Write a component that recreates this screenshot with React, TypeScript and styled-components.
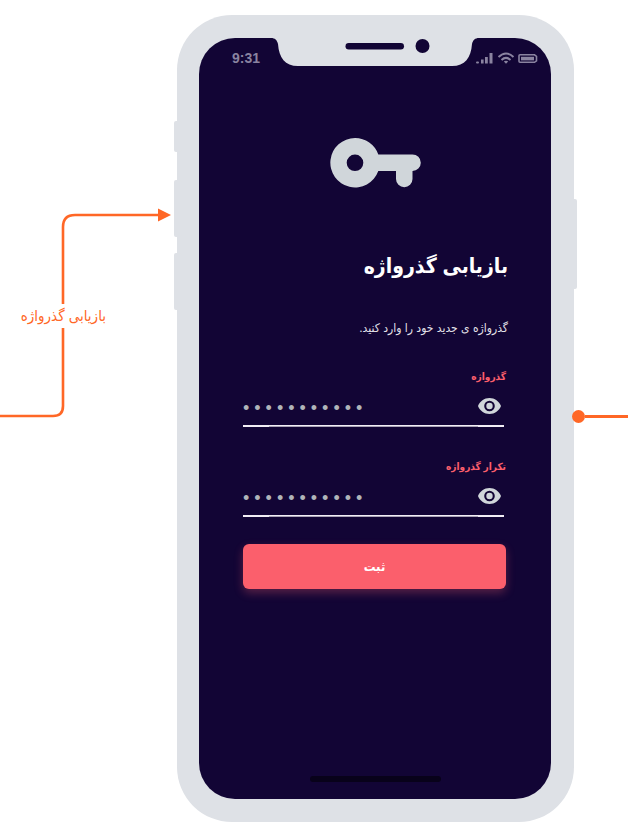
import React, { useId, useState } from "react";
import styled, { createGlobalStyle } from "styled-components";

const colors = {
  shell: "#dee1e6",
  screen: "#120535",
  coral: "#fb5f6c",
  orange: "#ff6726",
  icon: "#d0d6da",
  status: "#8a83a0",
};

const fonts = '"Liberation Sans", "DejaVu Sans Condensed", "DejaVu Sans", sans-serif';

const GlobalStyle = createGlobalStyle`
  *, *::before, *::after { box-sizing: border-box; }
  body { margin: 0; background: #fff; font-family: ${fonts}; }
`;

const Board = styled.div`
  display: grid;
  grid-template-columns: minmax(120px, 177fr) minmax(340px, 397fr) minmax(40px, 54fr);
  align-items: start;
  padding: 15px 0 10px;
  overflow: hidden;
`;

const Incoming = styled.div`
  position: relative;
  display: flex;
  justify-content: flex-end;
  margin-top: 191px;
  padding-right: 6px;
`;

const FlowLabel = styled.span`
  position: absolute;
  right: 68px;
  top: 98px;
  padding: 0 3px;
  background: #fff;
  color: ${colors.orange};
  font-size: 15px;
  line-height: 24px;
  white-space: nowrap;
`;

const Outgoing = styled.div`
  position: relative;
  z-index: 1;
  margin: 395px 0 0 -2px;
  display: flex;
  align-items: center;
`;

const Dot = styled.span`
  width: 13px;
  height: 13px;
  border-radius: 50%;
  background: ${colors.orange};
`;

const Line = styled.span`
  flex: 1;
  height: 3px;
  background: ${colors.orange};
`;

const Phone = styled.main`
  position: relative;
  padding: 23px 23px 23px 22px;
  border-radius: 55px;
  background: ${colors.shell};
`;

const SideKey = styled.span<{ $side: "left" | "right"; $top: number; $length: number }>`
  position: absolute;
  ${(p) => p.$side}: -3px;
  top: ${(p) => p.$top}px;
  width: 8px;
  height: ${(p) => p.$length}px;
  border-radius: 2px;
  background: ${colors.shell};
`;

const Screen = styled.section`
  display: flex;
  flex-direction: column;
  min-height: 761px;
  border-radius: 36px;
  overflow: hidden;
  background: ${colors.screen};
  color: #fff;
`;

const StatusBar = styled.header`
  display: grid;
  grid-template-columns: minmax(0, 1fr) 208px minmax(0, 1fr);
  color: ${colors.status};
`;

const Clock = styled.time`
  padding: 12px 0 0 33px;
  font-size: 14px;
  font-weight: 700;
  line-height: 16px;
`;

const StatusIcons = styled.div`
  display: flex;
  justify-content: flex-end;
  padding: 14px 13px 0 0;

  svg { flex: none; }
`;

const Content = styled.div`
  display: flex;
  flex-direction: column;
  padding: 71px 43px 0 44px;
`;

const KeyIcon = styled.svg`
  align-self: center;
`;

const Title = styled.h1`
  margin: 62px 0 0;
  font-size: 21px;
  line-height: 32px;
`;

const Hint = styled.p`
  margin: 38px 0 0;
  color: #e4e2ea;
  font-size: 12px;
  line-height: 16px;
`;

const Form = styled.form`
  display: flex;
  flex-direction: column;
  gap: 32px;
  margin: 33px 2px 0 0;
`;

const Field = styled.div`
  display: flex;
  flex-direction: column;
`;

const Label = styled.label`
  color: ${colors.coral};
  font-size: 10px;
  font-weight: 700;
  line-height: 16px;
`;

const Control = styled.div`
  display: flex;
  align-items: center;
  direction: ltr;
  height: 42px;
  margin-right: 2px;
  padding-right: 3px;
  background:
    linear-gradient(#f1edf5, #f1edf5) 0 calc(100% - 1px) / 100% 1px no-repeat,
    linear-gradient(90deg, #f1edf5 26px, #a9a3b5 26px calc(100% - 26px), #f1edf5 calc(100% - 26px)) 0 100% / 100% 1px no-repeat;
`;

const MaskedInput = styled.input`
  flex: 1;
  min-width: 0;
  padding: 4px 0 0;
  border: 0;
  outline: 0;
  background: transparent;
  color: #b0b5b9;
  font: 18px/24px "Liberation Sans", sans-serif;
`;

const RevealButton = styled.button`
  display: flex;
  padding: 0;
  border: 0;
  background: none;
  color: ${colors.icon};
  cursor: pointer;
`;

const Submit = styled.button`
  height: 45px;
  margin-top: -5px;
  border: 0;
  border-radius: 6px;
  background: ${colors.coral};
  box-shadow: 0 4px 10px rgba(251, 95, 108, 0.3);
  color: #fff;
  font: 700 13px/20px ${fonts};
  cursor: pointer;
`;

const HomeBar = styled.div`
  align-self: center;
  width: 131px;
  height: 6px;
  margin: auto 0 17px;
  border-radius: 3px;
  background: #08021a;
`;

function FlowArrow() {
  return (
    <svg width="171" height="213" viewBox="0 0 171 213" aria-hidden="true">
      <path d="M0 210H53Q63 210 63 200V21Q63 9 75 9H159" fill="none" stroke={colors.orange} strokeWidth="2.6" />
      <path d="M158 2.5 171 9l-13 6.5z" fill={colors.orange} />
    </svg>
  );
}

function Notch() {
  return (
    <svg width="208" height="29" viewBox="0 0 208 29" aria-hidden="true">
      <path
        d="M0 0H208C204 0 202 2 201 6C200 20 194 28 181 28H27C14 28 8 20 7 6C6 2 4 0 0 0Z"
        fill={colors.shell}
      />
      <rect x="74.5" y="5" width="58.5" height="6.5" rx="3.25" fill={colors.screen} />
      <circle cx="151.5" cy="8" r="7" fill={colors.screen} />
    </svg>
  );
}

function StatusGlyphs() {
  return (
    <svg width="62" height="13" viewBox="0 0 62 13" fill="currentColor" aria-hidden="true">
      <rect x="0" y="9.5" width="3" height="2" rx="1" />
      <rect x="5" y="7.5" width="2.6" height="4" />
      <rect x="9" y="5" width="2.8" height="6.5" />
      <rect x="13.5" y="1" width="3" height="10.5" />
      <g fill="none" stroke="currentColor" strokeWidth="2">
        <path d="M22.5 5Q30 -2 37.5 5" />
        <path d="M25.5 8Q30 3.8 34.5 8" />
      </g>
      <path d="M27.8 9.5Q30 8 32.200 9.5L30 11.8z" />
      <path d="M44 2.800h14.5l2 1.500v4.500l-2 1.500H44q-1 0-1-1V3.800q0-1 1-1z" fill="none" stroke="currentColor" strokeWidth="1.6" />
      <rect x="45" y="4.8" width="13" height="3.6" />
    </svg>
  );
}

function EyeIcon() {
  return (
    <svg width="23" height="16" viewBox="0 0 23 16" aria-hidden="true">
      <path
        fill="currentColor"
        fillRule="evenodd"
        d="M11.5 0C6.3 0 1.8 3.3 0 8c1.8 4.7 6.3 8 11.5 8S21.2 12.7 23 8C21.2 3.3 16.7 0 11.5 0Zm0 13.3a5.3 5.3 0 1 1 0-10.6 5.3 5.3 0 0 1 0 10.6Zm0-2.1a3.2 3.2 0 1 0 0-6.4 3.2 3.2 0 0 0 0 6.4Z"
      />
    </svg>
  );
}

function PasswordField({ label }: { label: string }) {
  const id = useId();
  const [value, setValue] = useState(Array(11).fill("•").join(" "));
  return (
    <Field>
      <Label htmlFor={id}>{label}</Label>
      <Control>
        <MaskedInput id={id} value={value} onChange={(e) => setValue(e.target.value)} />
        <RevealButton type="button" aria-label="نمایش گذرواژه">
          <EyeIcon />
        </RevealButton>
      </Control>
    </Field>
  );
}

export default function App() {
  return (
    <>
      <GlobalStyle />
      <Board>
        <Incoming>
          <FlowArrow />
          <FlowLabel dir="rtl">بازیابی گذرواژه</FlowLabel>
        </Incoming>
        <Phone>
          <SideKey $side="left" $top={106} $length={31} />
          <SideKey $side="left" $top={165} $length={57} />
          <SideKey $side="left" $top={238} $length={57} />
          <SideKey $side="right" $top={184} $length={90} />
          <Screen>
            <StatusBar>
              <Clock>9:31</Clock>
              <Notch />
              <StatusIcons>
                <StatusGlyphs />
              </StatusIcons>
            </StatusBar>
            <Content dir="rtl" lang="fa">
              <KeyIcon width="92" height="50" viewBox="0 0 92 50" aria-hidden="true">
                <path
                  fill={colors.icon}
                  fillRule="evenodd"
                  d="M25 0a24.7 24.7 0 1 0 23.3 33H66v8a8.2 8.2 0 0 0 16.5 0v-8a8.3 8.3 0 0 0 0-16.6H48.300A24.7 24.7 0 0 0 25 0Zm0 16.5a8.3 8.3 0 1 1 0 16.6 8.3 8.3 0 0 1 0-16.6Z"
                />
              </KeyIcon>
              <Title>بازیابی گذرواژه</Title>
              <Hint>گذرواژه ی جدید خود را وارد کنید.</Hint>
              <Form onSubmit={(e) => e.preventDefault()}>
                <PasswordField label="گذرواژه" />
                <PasswordField label="تکرار گذرواژه" />
                <Submit type="submit">ثبت</Submit>
              </Form>
            </Content>
            <HomeBar />
          </Screen>
        </Phone>
        <Outgoing>
          <Dot />
          <Line />
        </Outgoing>
      </Board>
    </>
  );
}
